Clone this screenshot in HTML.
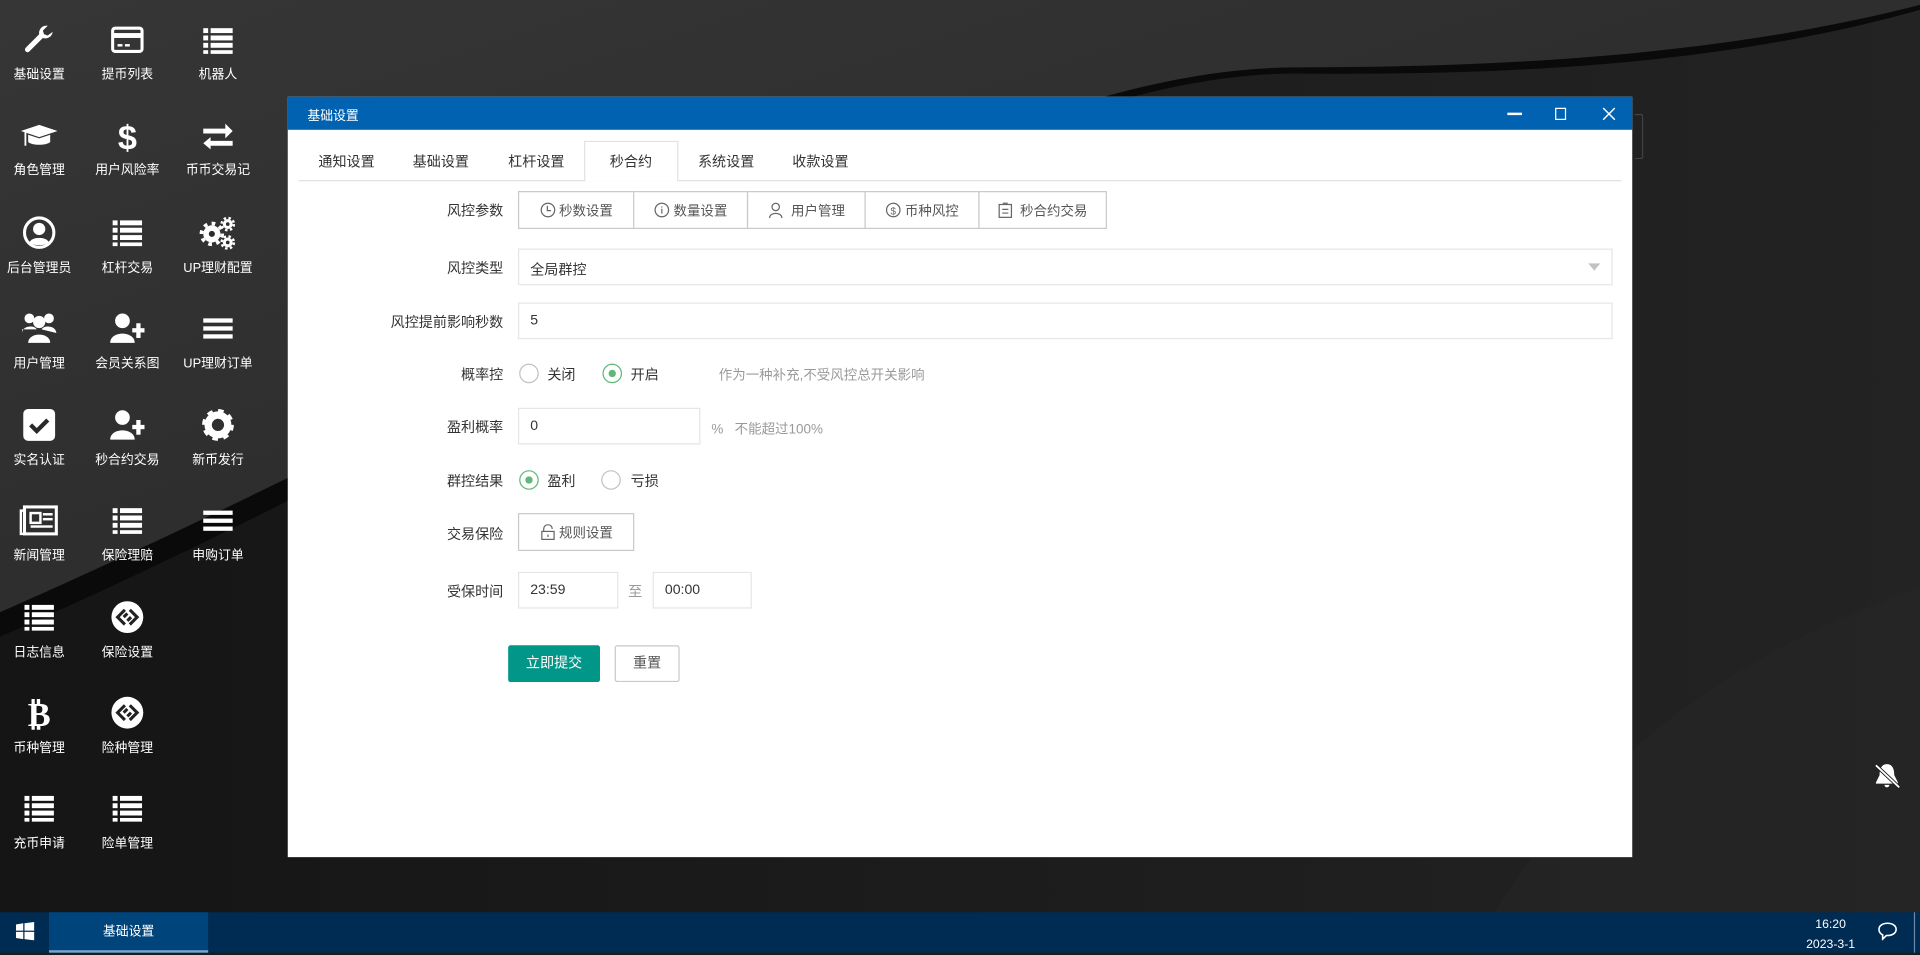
<!DOCTYPE html>
<html><head><meta charset="utf-8"><style>
*{margin:0;padding:0;box-sizing:border-box}
html,body{width:1920px;height:953px;overflow:hidden;background:#1c1c1c}
#w{position:absolute;left:0;top:0;width:1568px;height:778px;transform:scale(1.22449);transform-origin:0 0;font-family:"Liberation Sans","Noto Sans CJK SC",sans-serif;}
.abs{position:absolute}
.di{position:absolute;width:70px;text-align:center;color:#fff;font-size:10.5px}
.di svg{display:block;margin:0 auto 7px}
.lbl{position:absolute;right:1157px;font-size:11.5px;color:#333;text-align:right;white-space:nowrap}
.inp{position:absolute;border:1px solid #e6e6e6;height:30px;font-size:11.5px;color:#333;padding:8px 9px;background:#fff}
.tab{position:absolute;top:124px;font-size:11.5px;color:#333}
.seg{position:absolute;top:156px;height:31px;border:1px solid #c9c9c9;font-size:11px;color:#555;display:flex;align-items:center;justify-content:center;gap:3px;background:#fff}
.radio{position:absolute;width:16px;height:16px;border-radius:50%;border:1px solid #c2c2c2;background:#fff}
.radio.on{border-color:#5fb878}
.radio.on:after{content:"";position:absolute;left:4px;top:4px;width:6px;height:6px;border-radius:50%;background:#5fb878}
.rt{position:absolute;font-size:11.5px;color:#333}
</style></head><body><div id="w">
<svg class="abs" style="left:0;top:0" width="1568" height="778">
<defs><linearGradient id="g1" x1="0" y1="0" x2="1" y2="1"><stop offset="0" stop-color="#363636"/><stop offset="0.6" stop-color="#2c2c2c"/><stop offset="1" stop-color="#3a3a3a"/></linearGradient>
<linearGradient id="g2" x1="0" y1="0" x2="1" y2="0"><stop offset="0" stop-color="#151515"/><stop offset="1" stop-color="#232323"/></linearGradient></defs>
<rect width="1568" height="778" fill="url(#g2)"/>
<path d="M0 0H1568V8C1420 50 1250 62 1060 60C800 60 500 300 0 520Z" fill="#0a0a0a"/>
<path d="M0 0H1568V4C1420 42 1250 55 1060 55C800 55 500 280 0 500Z" fill="url(#g1)"/>
<path d="M1200 778C1300 600 1450 520 1568 480V778Z" fill="#262626" opacity=".6"/>
</svg>

<!-- desktop icons -->
<div class="di" style="left:-3px;top:20px"><svg width="26" height="26" viewBox="0 0 26 26"><path d="M24 6a6 6 0 0 1-8 5L5 22a2 2 0 0 1-3-3L13 8a6 6 0 0 1 7-7l-4 4 1 3 3 1z" fill="#fff"/></svg>基础设置</div>
<div class="di" style="left:69px;top:20px"><svg width="28" height="26" viewBox="0 0 28 26"><rect x="2" y="3" width="24" height="19" rx="2" fill="none" stroke="#fff" stroke-width="2.5"/><rect x="2" y="7" width="24" height="4" fill="#fff"/><rect x="6" y="16" width="4" height="2" fill="#fff"/><rect x="12" y="16" width="4" height="2" fill="#fff"/></svg>提币列表</div>
<div class="di" style="left:143px;top:20px"><svg width="28" height="26" viewBox="0 0 28 26"><g fill="#fff"><rect x="2" y="3" width="4" height="4"/><rect x="8" y="3" width="18" height="4"/><rect x="2" y="9" width="4" height="4"/><rect x="8" y="9" width="18" height="4"/><rect x="2" y="15" width="4" height="4"/><rect x="8" y="15" width="18" height="4"/><rect x="2" y="21" width="4" height="3"/><rect x="8" y="21" width="18" height="3"/></g></svg>机器人</div>

<div class="di" style="left:-3px;top:98px"><svg width="32" height="26" viewBox="0 0 32 26"><path d="M1 9l15-5 15 5-15 5z" fill="#fff"/><path d="M7 12v6c3 3 15 3 18 0v-6l-9 3z" fill="#fff"/><rect x="4" y="10" width="1.5" height="11" fill="#fff"/></svg>角色管理</div>
<div class="di" style="left:69px;top:98px"><svg width="28" height="26" viewBox="0 0 28 26"><text x="14" y="24" text-anchor="middle" font-size="28" font-weight="bold" fill="#fff" font-family="Liberation Sans">$</text></svg>用户风险率</div>
<div class="di" style="left:143px;top:98px"><svg width="28" height="26" viewBox="0 0 28 26"><path d="M2 7h18V3l6 6-6 6v-4H2zM26 17H8v-3l-6 5 6 5v-3h18z" fill="#fff"/></svg>币币交易记</div>

<div class="di" style="left:-3px;top:176px"><svg width="28" height="28" viewBox="0 0 28 28"><circle cx="14" cy="14" r="12" fill="none" stroke="#fff" stroke-width="2.5"/><circle cx="14" cy="11" r="5" fill="#fff"/><path d="M6 22c2-5 14-5 16 0c-4 3-12 3-16 0z" fill="#fff"/></svg>后台管理员</div>
<div class="di" style="left:69px;top:176px"><svg width="28" height="28" viewBox="0 0 28 28"><g fill="#fff"><rect x="2" y="4" width="4" height="4"/><rect x="8" y="4" width="18" height="4"/><rect x="2" y="10" width="4" height="4"/><rect x="8" y="10" width="18" height="4"/><rect x="2" y="16" width="4" height="4"/><rect x="8" y="16" width="18" height="4"/><rect x="2" y="22" width="4" height="3"/><rect x="8" y="22" width="18" height="3"/></g></svg>杠杆交易</div>
<div class="di" style="left:143px;top:176px"><svg width="32" height="28" viewBox="0 0 32 28"><circle cx="11" cy="15" r="7" fill="#fff"/><circle cx="11" cy="15" r="8.5" fill="none" stroke="#fff" stroke-width="3" stroke-dasharray="3 3.6"/><circle cx="11" cy="15" r="2.5" fill="#2d2d2d"/><circle cx="24" cy="7" r="4" fill="#fff"/><circle cx="24" cy="7" r="5" fill="none" stroke="#fff" stroke-width="2" stroke-dasharray="2 2"/><circle cx="24" cy="7" r="1.5" fill="#2d2d2d"/><circle cx="24" cy="22" r="4" fill="#fff"/><circle cx="24" cy="22" r="5" fill="none" stroke="#fff" stroke-width="2" stroke-dasharray="2 2"/><circle cx="24" cy="22" r="1.5" fill="#2d2d2d"/></svg>UP理财配置</div>

<div class="di" style="left:-3px;top:254px"><svg width="32" height="28" viewBox="0 0 32 28"><g fill="#fff"><circle cx="8" cy="6" r="4"/><circle cx="24" cy="6" r="4"/><circle cx="16" cy="9" r="5"/><path d="M2 18c0-6 10-7 12-3H2zM18 15c2-4 12-3 12 3z"/><path d="M7 26c0-9 18-9 18 0z"/></g></svg>用户管理</div>
<div class="di" style="left:69px;top:254px"><svg width="32" height="28" viewBox="0 0 32 28"><g fill="#fff"><circle cx="12" cy="8" r="6"/><path d="M2 26c0-10 20-10 20 0z"/><rect x="20" y="14" width="10" height="3.5"/><rect x="23.3" y="10" width="3.5" height="12"/></g></svg>会员关系图</div>
<div class="di" style="left:143px;top:254px"><svg width="28" height="28" viewBox="0 0 28 28"><g fill="#fff"><rect x="2" y="6" width="24" height="3.5"/><rect x="2" y="12.5" width="24" height="3.5"/><rect x="2" y="19" width="24" height="3.5"/></g></svg>UP理财订单</div>

<div class="di" style="left:-3px;top:333px"><svg width="28" height="28" viewBox="0 0 28 28"><rect x="1" y="1" width="26" height="26" rx="4" fill="#fff"/><path d="M7 14l5 5 9-9" stroke="#2a2a2a" stroke-width="3.5" fill="none"/></svg>实名认证</div>
<div class="di" style="left:69px;top:333px"><svg width="32" height="28" viewBox="0 0 32 28"><g fill="#fff"><circle cx="12" cy="8" r="6"/><path d="M2 26c0-10 20-10 20 0z"/><rect x="20" y="14" width="10" height="3.5"/><rect x="23.3" y="10" width="3.5" height="12"/></g></svg>秒合约交易</div>
<div class="di" style="left:143px;top:333px"><svg width="28" height="28" viewBox="0 0 28 28"><circle cx="14" cy="14" r="8" fill="none" stroke="#fff" stroke-width="6"/><circle cx="14" cy="14" r="11" fill="none" stroke="#fff" stroke-width="4" stroke-dasharray="4.3 4.3"/></svg>新币发行</div>

<div class="di" style="left:-3px;top:411px"><svg width="32" height="28" viewBox="0 0 32 28"><rect x="4" y="3" width="26" height="22" fill="none" stroke="#fff" stroke-width="2.5"/><path d="M4 6H1v19h4" fill="none" stroke="#fff" stroke-width="2"/><rect x="9" y="8" width="8" height="8" fill="none" stroke="#fff" stroke-width="2"/><g fill="#fff"><rect x="19" y="8" width="8" height="2"/><rect x="19" y="12" width="8" height="2"/><rect x="9" y="18" width="18" height="2"/></g></svg>新闻管理</div>
<div class="di" style="left:69px;top:411px"><svg width="28" height="28" viewBox="0 0 28 28"><g fill="#fff"><rect x="2" y="4" width="4" height="4"/><rect x="8" y="4" width="18" height="4"/><rect x="2" y="10" width="4" height="4"/><rect x="8" y="10" width="18" height="4"/><rect x="2" y="16" width="4" height="4"/><rect x="8" y="16" width="18" height="4"/><rect x="2" y="22" width="4" height="3"/><rect x="8" y="22" width="18" height="3"/></g></svg>保险理赔</div>
<div class="di" style="left:143px;top:411px"><svg width="28" height="28" viewBox="0 0 28 28"><g fill="#fff"><rect x="2" y="6" width="24" height="3.5"/><rect x="2" y="12.5" width="24" height="3.5"/><rect x="2" y="19" width="24" height="3.5"/></g></svg>申购订单</div>

<div class="di" style="left:-3px;top:490px"><svg width="28" height="28" viewBox="0 0 28 28"><g fill="#fff"><rect x="2" y="4" width="4" height="4"/><rect x="8" y="4" width="18" height="4"/><rect x="2" y="10" width="4" height="4"/><rect x="8" y="10" width="18" height="4"/><rect x="2" y="16" width="4" height="4"/><rect x="8" y="16" width="18" height="4"/><rect x="2" y="22" width="4" height="3"/><rect x="8" y="22" width="18" height="3"/></g></svg>日志信息</div>
<div class="di" style="left:69px;top:490px"><svg width="28" height="28" viewBox="0 0 28 28"><circle cx="14" cy="14" r="13" fill="#fff"/><path d="M12 8l-6 6 6 6M16 8l6 6-6 6M11 14l3-3M17 14l-3 3" stroke="#222" stroke-width="2.5" fill="none"/></svg>保险设置</div>

<div class="di" style="left:-3px;top:568px"><svg width="28" height="28" viewBox="0 0 28 28"><text x="14" y="25" text-anchor="middle" font-size="28" font-weight="bold" fill="#fff" font-family="DejaVu Sans">₿</text></svg>币种管理</div>
<div class="di" style="left:69px;top:568px"><svg width="28" height="28" viewBox="0 0 28 28"><circle cx="14" cy="14" r="13" fill="#fff"/><path d="M12 8l-6 6 6 6M16 8l6 6-6 6M11 14l3-3M17 14l-3 3" stroke="#222" stroke-width="2.5" fill="none"/></svg>险种管理</div>

<div class="di" style="left:-3px;top:646px"><svg width="28" height="28" viewBox="0 0 28 28"><g fill="#fff"><rect x="2" y="4" width="4" height="4"/><rect x="8" y="4" width="18" height="4"/><rect x="2" y="10" width="4" height="4"/><rect x="8" y="10" width="18" height="4"/><rect x="2" y="16" width="4" height="4"/><rect x="8" y="16" width="18" height="4"/><rect x="2" y="22" width="4" height="3"/><rect x="8" y="22" width="18" height="3"/></g></svg>充币申请</div>
<div class="di" style="left:69px;top:646px"><svg width="28" height="28" viewBox="0 0 28 28"><g fill="#fff"><rect x="2" y="4" width="4" height="4"/><rect x="8" y="4" width="18" height="4"/><rect x="2" y="10" width="4" height="4"/><rect x="8" y="10" width="18" height="4"/><rect x="2" y="16" width="4" height="4"/><rect x="8" y="16" width="18" height="4"/><rect x="2" y="22" width="4" height="3"/><rect x="8" y="22" width="18" height="3"/></g></svg>险单管理</div>

<!-- bell -->
<svg class="abs" style="left:1529px;top:622px" width="24" height="24" viewBox="0 0 24 24"><path d="M12 2c5 0 6 5 6 9l3 6v1H3v-1l3-6c0-4 1-9 6-9zM10 19h4a2 2 0 0 1-4 0z" fill="#fff"/><path d="M3 3l19 18" stroke="#1c1c1c" stroke-width="3"/><path d="M3 3l19 18" stroke="#fff" stroke-width="1.5"/></svg>
<div class="abs" style="left:1335px;top:93px;width:7px;height:37px;border:1px solid #444;border-left:none;border-radius:0 2px 2px 0"></div>

<!-- dialog -->
<div class="abs" style="left:235px;top:79px;width:1098px;height:621px;background:#fff">
 <div style="height:27px;background:#0062b0;color:#fff;font-size:10.5px;padding:8px 16px;position:relative">基础设置
  <div class="abs" style="left:996px;top:13px;width:12px;height:1.5px;background:#fff"></div>
  <div class="abs" style="left:1035px;top:9px;width:9px;height:10px;border:1px solid #fff"></div>
  <svg class="abs" style="left:1074px;top:9px" width="10" height="10"><path d="M0 0L10 10M10 0L0 10" stroke="#fff" stroke-width="1.2"/></svg>
 </div>
</div>
<div class="abs" style="left:244px;top:147px;width:1080px;height:1px;background:#e2e2e2"></div>
<div class="abs" style="left:477px;top:115px;width:77px;height:33px;background:#fff;border:1px solid #e2e2e2;border-bottom:none"></div>
<div class="tab" style="left:260px">通知设置</div>
<div class="tab" style="left:337px">基础设置</div>
<div class="tab" style="left:415px">杠杆设置</div>
<div class="tab" style="left:498px">秒合约</div>
<div class="tab" style="left:570px">系统设置</div>
<div class="tab" style="left:647px">收款设置</div>

<div class="lbl" style="top:164px">风控参数</div>
<div class="seg" style="left:423px;width:95px"><svg width="13" height="13"><circle cx="6.5" cy="6.5" r="5.5" fill="none" stroke="#666"/><path d="M6 3v4h3" stroke="#666" fill="none"/></svg>秒数设置</div>
<div class="seg" style="left:517px;width:94px"><svg width="13" height="13"><circle cx="6.5" cy="6.5" r="5.5" fill="none" stroke="#666"/><path d="M6.5 5.5v4M6.5 3.5v1" stroke="#666"/></svg>数量设置</div>
<div class="seg" style="left:610px;width:97px"><svg width="13" height="13"><circle cx="6.5" cy="4" r="3" fill="none" stroke="#666"/><path d="M1.5 13c0-5 10-5 10 0" stroke="#666" fill="none"/></svg>&nbsp;用户管理</div>
<div class="seg" style="left:706px;width:94px"><svg width="13" height="13"><circle cx="6.5" cy="6.5" r="5.5" fill="none" stroke="#666"/><text x="6.5" y="10" font-size="8" text-anchor="middle" fill="#666">$</text></svg>币种风控</div>
<div class="seg" style="left:799px;width:105px"><svg width="12" height="13"><rect x="1" y="2" width="10" height="10.5" fill="none" stroke="#666"/><path d="M4 1h4M3.5 6h5M3.5 9h5" stroke="#666"/></svg>&nbsp;秒合约交易</div>

<div class="lbl" style="top:211px">风控类型</div>
<div class="inp" style="left:423px;top:203px;width:894px">全局群控</div>
<svg class="abs" style="left:1297px;top:215px" width="10" height="6"><path d="M0 0h10L5 6z" fill="#c2c2c2"/></svg>

<div class="lbl" style="top:255px">风控提前影响秒数</div>
<div class="inp" style="left:423px;top:247px;width:894px">5</div>

<div class="lbl" style="top:298px">概率控</div>
<div class="radio" style="left:424px;top:297px"></div><div class="rt" style="left:447px;top:298px">关闭</div>
<div class="radio on" style="left:492px;top:297px"></div><div class="rt" style="left:515px;top:298px">开启</div>
<div class="rt" style="left:587px;top:298px;color:#999;font-size:11px">作为一种补充,不受风控总开关影响</div>

<div class="lbl" style="top:341px">盈利概率</div>
<div class="inp" style="left:423px;top:333px;width:149px">0</div>
<div class="rt" style="left:581px;top:342px;color:#999;font-size:11px">%&nbsp;&nbsp;&nbsp;不能超过100%</div>

<div class="lbl" style="top:385px">群控结果</div>
<div class="radio on" style="left:424px;top:384px"></div><div class="rt" style="left:447px;top:385px">盈利</div>
<div class="radio" style="left:491px;top:384px"></div><div class="rt" style="left:515px;top:385px">亏损</div>

<div class="lbl" style="top:428px">交易保险</div>
<div class="seg" style="left:423px;top:419px;width:95px;color:#555"><svg width="13" height="13"><path d="M3 6V4a3.5 3.5 0 0 1 7 0" stroke="#666" fill="none"/><rect x="1.5" y="6" width="10" height="6.5" fill="none" stroke="#666"/><path d="M6.5 8.5v2" stroke="#666"/></svg>规则设置</div>

<div class="lbl" style="top:475px">受保时间</div>
<div class="inp" style="left:423px;top:467px;width:82px">23:59</div>
<div class="rt" style="left:513px;top:475px;color:#999">至</div>
<div class="inp" style="left:533px;top:467px;width:81px">00:00</div>

<div class="abs" style="left:415px;top:527px;width:75px;height:30px;background:#009688;color:#fff;font-size:11.5px;text-align:center;line-height:30px;border-radius:2px">立即提交</div>
<div class="abs" style="left:502px;top:527px;width:53px;height:30px;background:#fff;border:1px solid #c9c9c9;color:#555;font-size:11.5px;text-align:center;line-height:28px;border-radius:2px">重置</div>

<!-- taskbar -->
<div class="abs" style="left:0;top:745px;width:1568px;height:33px;background:#002b52"></div>
<svg class="abs" style="left:13px;top:753px" width="15" height="15"><g fill="#fff"><path d="M0 2l6-1v6H0zM7 1l8-1v7H7zM0 8h6v6l-6-1zM7 8h8v7l-8-1z"/></g></svg>
<div class="abs" style="left:40px;top:745px;width:130px;height:33px;background:#00447c;color:#fff;font-size:10.5px;text-align:center;line-height:32px;border-bottom:2px solid #7aa6cc">基础设置</div>
<div class="abs" style="left:1470px;top:748px;width:50px;text-align:center;color:#fff;font-size:10px;line-height:16px">16:20<br>2023-3-1</div>
<svg class="abs" style="left:1533px;top:752px" width="17" height="16"><path d="M8.5 2c4 0 7 2 7 5s-3 5-7 5l-1 0-3 3v-3.5C2.5 10.5 1.5 9 1.5 7c0-3 3-5 7-5z" fill="none" stroke="#fff" stroke-width="1.3"/></svg>
<div class="abs" style="left:1563px;top:745px;width:1px;height:33px;background:#6b88a6"></div>
</div></body></html>
